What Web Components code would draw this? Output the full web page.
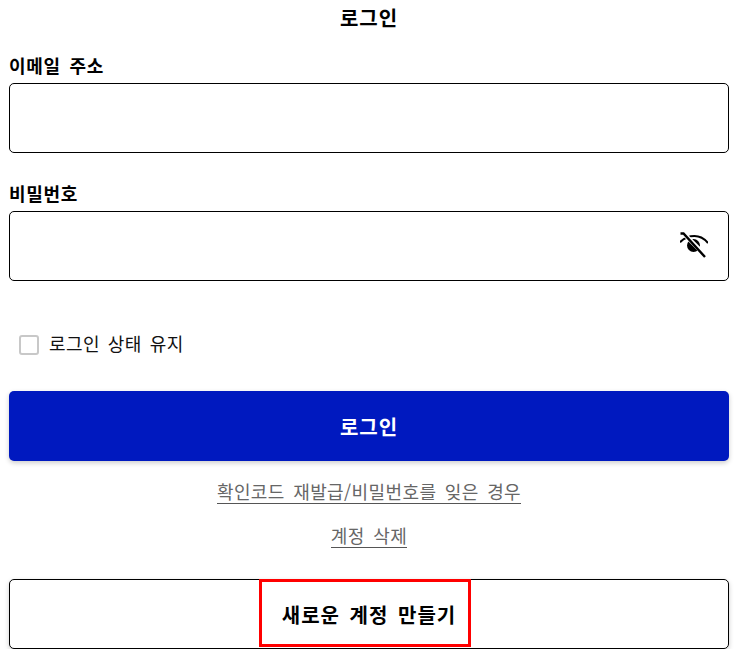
<!DOCTYPE html>
<html lang="ko">
<head>
<meta charset="utf-8">
<title>로그인</title>
<style>
  html, body { margin: 0; background: #fff; }
  body { font-family: "Noto Sans CJK KR", "Noto Sans", sans-serif; color: #000; }
</style>
</head>
<body>
<login-page></login-page>

<template id="tpl-field">
  <style>
    :host { display: block; }
    label { display: block; font-size: 18px; font-weight: 700; line-height: 26px; margin-bottom: 5px; letter-spacing: .7px; word-spacing: 3px; }
    .box {
      height: 70px; box-sizing: border-box; border: 1px solid #000; border-radius: 5px;
      display: flex; align-items: center; justify-content: flex-end; padding-right: 20px;
    }
    input { flex: 1; min-width: 0; height: 100%; border: 0; outline: 0; background: none; padding: 0 15px; font: inherit; }
    ::slotted(svg) { display: block; }
  </style>
  <label id="lbl"></label>
  <div class="box"><input id="inp"><slot></slot></div>
</template>

<template id="tpl-check">
  <style>
    :host { display: flex; align-items: center; gap: 10px; padding-left: 10px; font-size: 18px; line-height: 26px; color: #111; letter-spacing: .4px; word-spacing: 2.5px; }
    .tick { width: 20px; height: 20px; margin-top: 4px; box-sizing: border-box; border: 2px solid #c8c8c8; border-radius: 3px; background: #fff; }
  </style>
  <span class="tick"></span><slot></slot>
</template>

<template id="tpl-button">
  <style>
    :host { display: flex; position: relative; align-items: center; justify-content: center; height: 70px; box-sizing: border-box;
      border-radius: 5px; font-size: 20px; font-weight: 700; letter-spacing: 1px; word-spacing: 3px; }
    :host([variant="primary"]) { background: #0019bf; color: #fff; box-shadow: 0 2px 5px rgba(0,0,0,.2); }
    :host([variant="outline"]) { background: #fff; color: #000; border: 1px solid #000; box-shadow: 0 2px 5px rgba(0,0,0,.2); }
    .mark { position: absolute; left: 249px; top: -1px; width: 212px; height: 68px; box-sizing: border-box; border: 3px solid #f00; display: none; }
    :host([marked]) .mark { display: block; }
  </style>
  <slot></slot><span class="mark"></span>
</template>

<template id="tpl-link">
  <style>
    :host { display: block; text-align: center; font-size: 18px; line-height: 24px; color: #666; letter-spacing: .4px; word-spacing: 3px; }
    span { display: inline-block; border-bottom: 1px solid #555; }
  </style>
  <span><slot></slot></span>
</template>

<template id="tpl-page">
  <style>
    :host { display: block; width: 720px; margin-left: 9px; }
    h1 { margin: 0; font-size: 20px; line-height: 26px; padding-top: 5px; height: 52px; box-sizing: border-box; text-align: center; font-weight: 700; letter-spacing: 1px; }
    login-field { margin-bottom: 27px; }
    login-check { margin-top: 49px; }
    login-button[variant="primary"] { margin-top: 35px; }
    .l1 { margin-top: 18px; }
    .l2 { margin-top: 19px; }
    login-button[variant="outline"] { margin-top: 31px; }
  </style>
  <h1>로그인</h1>
  <login-field label="이메일 주소"></login-field>
  <login-field label="비밀번호" style="margin-bottom:0">
    <svg width="28" height="28" viewBox="0 0 28 28" aria-hidden="true">
      <path d="M0 10.2C4.5 5.8 9.5 4 14.5 4c5 0 9.5 2.2 13.500 7" fill="none" stroke="#000" stroke-width="2"/>
      <circle cx="13.500" cy="13.500" r="6.500" fill="#000"/>
      <path d="M3 1 L27 25" fill="none" stroke="#fff" stroke-width="4.500"/>
      <path d="M0.500 1.500 H3.500 L25 25" fill="none" stroke="#000" stroke-width="2.400"/>
    </svg>
  </login-field>
  <login-check>로그인 상태 유지</login-check>
  <login-button variant="primary">로그인</login-button>
  <login-link class="l1">확인코드 재발급/비밀번호를 잊은 경우</login-link>
  <login-link class="l2">계정 삭제</login-link>
  <login-button variant="outline" marked>새로운 계정 만들기</login-button>
</template>

<script>
function stamp(el, id) {
  const root = el.attachShadow({ mode: 'open' });
  root.appendChild(document.getElementById(id).content.cloneNode(true));
  return root;
}

class LoginField extends HTMLElement {
  connectedCallback() {
    if (this.shadowRoot) return;
    const root = stamp(this, 'tpl-field');
    root.getElementById('lbl').textContent = this.getAttribute('label');
  }
}
class LoginCheck extends HTMLElement {
  constructor() { super(); stamp(this, 'tpl-check'); }
}
class LoginButton extends HTMLElement {
  constructor() { super(); stamp(this, 'tpl-button'); }
}
class LoginLink extends HTMLElement {
  constructor() { super(); stamp(this, 'tpl-link'); }
}
class LoginPage extends HTMLElement {
  constructor() { super(); stamp(this, 'tpl-page'); }
}

customElements.define('login-field', LoginField);
customElements.define('login-check', LoginCheck);
customElements.define('login-button', LoginButton);
customElements.define('login-link', LoginLink);
customElements.define('login-page', LoginPage);
</script>
</body>
</html>
